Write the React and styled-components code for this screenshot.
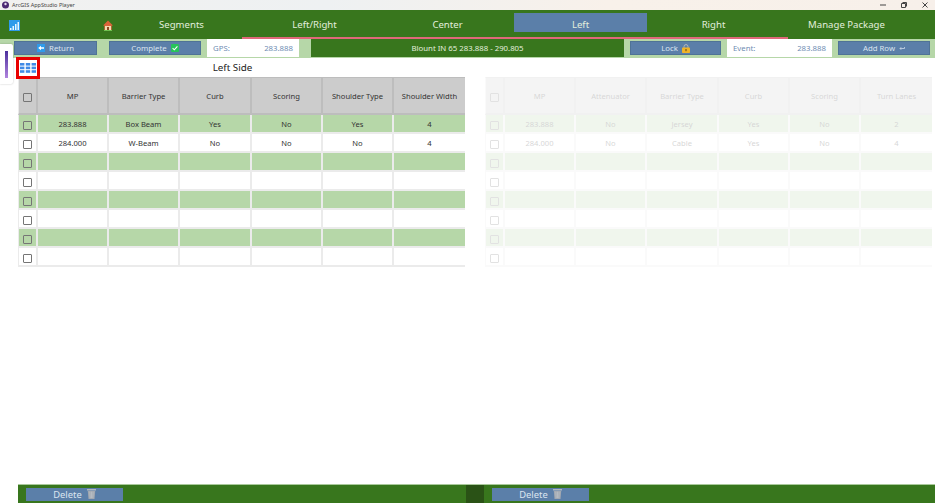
import React from "react";
import styled, { createGlobalStyle } from "styled-components";

const GlobalStyle = createGlobalStyle`
  html, body {
    margin: 0;
    padding: 0;
    height: 100%;
    overflow: hidden;
  }
  body {
    font-family: "Noto Sans", "DejaVu Sans", sans-serif;
    background: #fff;
  }
`;

const palette = {
  green: "#38761d",
  lightGreen: "#b6d7a8",
  blue: "#5b7fa9",
  blueBorder: "#4f7396",
  blueText: "#dbe5f0",
  header: "#cccccc",
};

const Page = styled.div`
  position: relative;
  width: 935px;
  height: 503px;
  display: flex;
  flex-direction: column;
  overflow: hidden;
`;

const TitleBar = styled.div`
  height: 10px;
  display: flex;
  align-items: center;
  padding: 0 6px 0 2px;
  background: linear-gradient(90deg, #f1f1f0, #eef1f2 35%, #f8f1ea 65%, #f7f0ea);
`;

const AppName = styled.span`
  margin-left: 3px;
  flex: 1;
  font-size: 5.5px;
  color: #444;
`;

const WindowControls = styled.div`
  display: flex;
  gap: 15px;
  margin-right: 1px;
  svg {
    display: block;
  }
`;

const Nav = styled.div`
  height: 29px;
  flex: none;
  display: flex;
  flex-direction: column;
  background: ${palette.green};
`;

const NavRow = styled.div`
  height: 19px;
  margin-top: 3px;
  display: flex;
  align-items: center;
`;

const NavIcons = styled.div`
  width: 115px;
  padding: 6px 2px 0 9px;
  box-sizing: border-box;
  display: flex;
  justify-content: space-between;
`;

const NavTab = styled.div`
  width: 133px;
  height: 19px;
  line-height: 24px;
  text-align: center;
  font-size: 9.6px;
  color: #e3eedd;
  background: ${(p) => (p.$active ? palette.blue : "transparent")};
`;

const NavLine = styled.div`
  height: 2px;
  width: 546px;
  margin: 5px 0 0 242px;
  background: #e0697a;
`;

const Toolbar = styled.div`
  height: 19px;
  flex: none;
  display: flex;
  align-items: stretch;
  padding-left: 14px;
  background: ${palette.lightGreen};
`;

const ToolButton = styled.div`
  width: ${(p) => p.$width}px;
  margin: 2px ${(p) => p.$gap || 0}px 3px 0;
  box-sizing: border-box;
  display: flex;
  align-items: center;
  justify-content: center;
  gap: 4px;
  font-size: 7.8px;
  color: ${palette.blueText};
  background: ${palette.blue};
  border: 1px solid ${palette.blueBorder};
`;

const ReadOut = styled.div`
  width: ${(p) => p.$width}px;
  margin-right: ${(p) => p.$gap}px;
  margin-bottom: 1px;
  padding: 0 6px;
  box-sizing: border-box;
  display: flex;
  align-items: center;
  justify-content: space-between;
  font-size: 7.8px;
  color: #6f8db3;
  background: #fff;
`;

const RouteTitle = styled.div`
  width: 313px;
  margin-right: 6px;
  margin-bottom: 1px;
  display: flex;
  align-items: center;
  justify-content: center;
  font-size: 7.8px;
  color: #e3eedd;
  background: ${palette.green};
`;

const Content = styled.div`
  flex: 1;
  display: flex;
  gap: 20px;
  padding-left: 18px;
`;

const Panel = styled.div`
  width: 447px;
`;

const PanelInner = styled.div`
  opacity: ${(p) => (p.$faded ? 0.2 : 1)};
`;

const PanelTitle = styled.div`
  height: 19px;
  line-height: 20px;
  padding-right: 18px;
  text-align: center;
  font-size: 9.8px;
  color: #222;
`;

const Row = styled.div`
  display: grid;
  grid-template-columns: 19px 71px 71px 72px 71px 71px 71px;
  height: ${(p) => (p.$header ? 38 : 19)}px;
  box-sizing: border-box;
  background: ${(p) => (p.$header ? palette.header : p.$shade ? palette.lightGreen : "#fff")};
  border-bottom: 2px solid ${(p) => (p.$header ? "#bdbdbd" : "#ebebeb")};
  border-top: ${(p) => (p.$header ? "1px solid #bdbdbd" : "0")};
  border-left: 1px solid #ebebeb;
`;

const Cell = styled.div`
  display: flex;
  align-items: center;
  justify-content: center;
  font-size: 7.6px;
  color: #333;
  border-right: 2px solid ${(p) => (p.$header ? "#bdbdbd" : "#ebebeb")};
  &:last-child {
    border-right: 0;
  }
`;

const CheckBox = styled.span`
  width: 9px;
  height: 9px;
  box-sizing: border-box;
  margin: 3px 0 0 0;
  border: 1.5px solid #757575;
  border-radius: 1px;
`;

const BottomBar = styled.div`
  height: 19px;
  flex: none;
  margin-left: 18px;
  display: flex;
  align-items: stretch;
  background: ${palette.green};
  border-top: 1px solid #a9c99b;
  box-sizing: border-box;
`;

const BottomSection = styled.div`
  width: 448px;
  padding-left: 8px;
  box-sizing: border-box;
  display: flex;
  align-items: center;
`;

const Divider = styled.div`
  width: 18px;
  background: #2a5216;
`;

const DeleteButton = styled.div`
  width: 97px;
  height: 13px;
  display: flex;
  align-items: center;
  justify-content: center;
  gap: 5px;
  font-size: 9.4px;
  color: ${palette.blueText};
  background: ${palette.blue};
`;

const SideTab = styled.div`
  position: absolute;
  left: 0;
  top: 44px;
  width: 13px;
  height: 40px;
  display: flex;
  justify-content: center;
  align-items: center;
  background: #fff;
  border-radius: 0 2px 2px 0;
  box-shadow: 0 0 2px rgba(0, 0, 0, 0.25);
`;

const SideTabBar = styled.div`
  width: 3px;
  height: 27px;
  background: linear-gradient(180deg, #4b2f9c, #b184de);
`;

const GridToggle = styled.div`
  position: absolute;
  left: 16px;
  top: 57px;
  width: 24px;
  height: 22px;
  box-sizing: border-box;
  display: flex;
  align-items: center;
  justify-content: center;
  background: #fff;
  border: 3px solid #e80000;
`;

const AppLogo = () => (
  <svg width="7" height="8" viewBox="0 0 7 8">
    <circle cx="3.5" cy="4" r="3.5" fill="#4c2a73" />
    <circle cx="3.5" cy="3" r="1.2" fill="#e6dcef" />
  </svg>
);

const SignalIcon = () => (
  <svg width="11" height="11" viewBox="0 0 11 11">
    <rect width="11" height="11" fill="#2f9bea" />
    <path d="M1 10h1.5V8H1zM3.5 10H5V6H3.5zM6 10h1.5V4H6zM8.5 10H10V2H8.5z" fill="#e8f6ff" />
  </svg>
);

const HomeIcon = () => (
  <svg width="10" height="11" viewBox="0 0 10 11">
    <path d="M5 0.5 0 5.5h1.3V10.5h7.4V5.5H10z" fill="#d9643a" />
    <rect x="2" y="6" width="6" height="4.5" fill="#f3d9b0" />
    <rect x="4" y="7" width="2" height="3.5" fill="#8a4b22" />
    <path d="M1 10.5h8" stroke="#6fc04f" />
  </svg>
);

const ReturnIcon = () => (
  <svg width="8" height="8" viewBox="0 0 8 8">
    <rect width="8" height="8" fill="#2f9bea" />
    <path d="M1.2 4 4 1.8V3.3H7V4.7H4V6.2z" fill="#fff" />
  </svg>
);

const CheckIcon = () => (
  <svg width="8" height="8" viewBox="0 0 8 8">
    <rect width="8" height="8" rx="1" fill="#27c45a" />
    <path d="M1.6 4.2 3.3 5.8 6.4 2.4" fill="none" stroke="#fff" strokeWidth="1.1" />
  </svg>
);

const LockIcon = () => (
  <svg width="8" height="9" viewBox="0 0 8 9">
    <path d="M2 4V2.6a2 2 0 0 1 4 0V4" fill="none" stroke="#b9b9b9" />
    <rect y="3.6" width="8" height="5.4" rx="0.8" fill="#f0b429" />
    <rect x="3.4" y="5" width="1.2" height="2.2" fill="#7a5510" />
  </svg>
);

const EnterIcon = () => (
  <svg width="6" height="5" viewBox="0 0 6 5">
    <path d="M5.5 1v1.5H1M2.2 1.2 1 2.5l1.2 1.3" fill="none" stroke="#dbe5f0" strokeWidth="0.7" />
  </svg>
);

const TrashIcon = () => (
  <svg width="9" height="10" viewBox="0 0 9 10">
    <rect width="9" height="1.5" fill="#b2b8c0" />
    <path d="M.8 1.9h7.4L7.5 10h-6z" fill="#a2a8b0" />
    <path d="M2.9 2.7 3.2 9M4.5 2.7V9M6.1 2.7 5.8 9" stroke="#c9ced4" strokeWidth="0.5" />
  </svg>
);

const GridIcon = () => (
  <svg width="16" height="10" viewBox="0 0 16 10">
    {[0, 3.6, 7.2].map((y) =>
      [0, 5.8, 11.6].map((x) => (
        <rect key={`${x}-${y}`} x={x} y={y} width="4.4" height="2.6" fill="#3f8ae6" />
      ))
    )}
  </svg>
);

const tabs = ["Segments", "Left/Right", "Center", "Left", "Right", "Manage Package"];

const leftTable = {
  title: "Left Side",
  columns: ["MP", "Barrier Type", "Curb", "Scoring", "Shoulder Type", "Shoulder Width"],
  rows: [
    ["283.888", "Box Beam", "Yes", "No", "Yes", "4"],
    ["284.000", "W-Beam", "No", "No", "No", "4"],
  ],
};

const rightTable = {
  title: "",
  columns: ["MP", "Attenuator", "Barrier Type", "Curb", "Scoring", "Turn Lanes"],
  rows: [
    ["283.888", "No", "Jersey", "Yes", "No", "2"],
    ["284.000", "No", "Cable", "Yes", "No", "4"],
  ],
};

const SideTable = ({ table, faded }) => {
  const rows = Array.from({ length: 8 }, (_, i) => table.rows[i] || ["", "", "", "", "", ""]);
  return (
    <Panel>
      <PanelInner $faded={faded}>
        <PanelTitle>{table.title}</PanelTitle>
        <Row $header>
          <Cell $header>
            <CheckBox />
          </Cell>
          {table.columns.map((c) => (
            <Cell $header key={c}>
              {c}
            </Cell>
          ))}
        </Row>
        {rows.map((row, i) => (
          <Row key={i} $shade={i % 2 === 0}>
            <Cell>
              <CheckBox />
            </Cell>
            {row.map((v, j) => (
              <Cell key={j}>{v}</Cell>
            ))}
          </Row>
        ))}
      </PanelInner>
    </Panel>
  );
};

const App = () => {
  return (
    <Page>
      <GlobalStyle />
      <TitleBar>
        <AppLogo />
        <AppName>ArcGIS AppStudio Player</AppName>
        <WindowControls>
          <svg width="6" height="6" viewBox="0 0 6 6">
            <path d="M0 3h6" stroke="#444" />
          </svg>
          <svg width="6" height="6" viewBox="0 0 6 6">
            <path d="M0.5 1.5h4v4h-4zM1.8 1.5V.5h3.7v3.7h-1" fill="none" stroke="#444" />
          </svg>
          <svg width="6" height="6" viewBox="0 0 6 6">
            <path d="M.5.5l5 5M5.5.5l-5 5" stroke="#444" />
          </svg>
        </WindowControls>
      </TitleBar>
      <Nav>
        <NavRow>
          <NavIcons>
            <SignalIcon />
            <HomeIcon />
          </NavIcons>
          {tabs.map((t) => (
            <NavTab key={t} $active={t === "Left"}>
              {t}
            </NavTab>
          ))}
        </NavRow>
        <NavLine />
      </Nav>
      <Toolbar>
        <ToolButton $width={83} $gap={12}>
          <ReturnIcon />
          Return
        </ToolButton>
        <ToolButton $width={92} $gap={6}>
          Complete
          <CheckIcon />
        </ToolButton>
        <ReadOut $width={92} $gap={12}>
          <span>GPS:</span>
          <span>283.888</span>
        </ReadOut>
        <RouteTitle>Blount IN 65 283.888 - 290.805</RouteTitle>
        <ToolButton $width={91} $gap={6}>
          Lock
          <LockIcon />
        </ToolButton>
        <ReadOut $width={105} $gap={6}>
          <span>Event:</span>
          <span>283.888</span>
        </ReadOut>
        <ToolButton $width={92}>
          Add Row
          <EnterIcon />
        </ToolButton>
      </Toolbar>
      <Content>
        <SideTable table={leftTable} />
        <SideTable table={rightTable} faded />
      </Content>
      <BottomBar>
        <BottomSection>
          <DeleteButton>
            Delete
            <TrashIcon />
          </DeleteButton>
        </BottomSection>
        <Divider />
        <BottomSection>
          <DeleteButton>
            Delete
            <TrashIcon />
          </DeleteButton>
        </BottomSection>
      </BottomBar>
      <SideTab>
        <SideTabBar />
      </SideTab>
      <GridToggle>
        <GridIcon />
      </GridToggle>
    </Page>
  );
};

export default App;
